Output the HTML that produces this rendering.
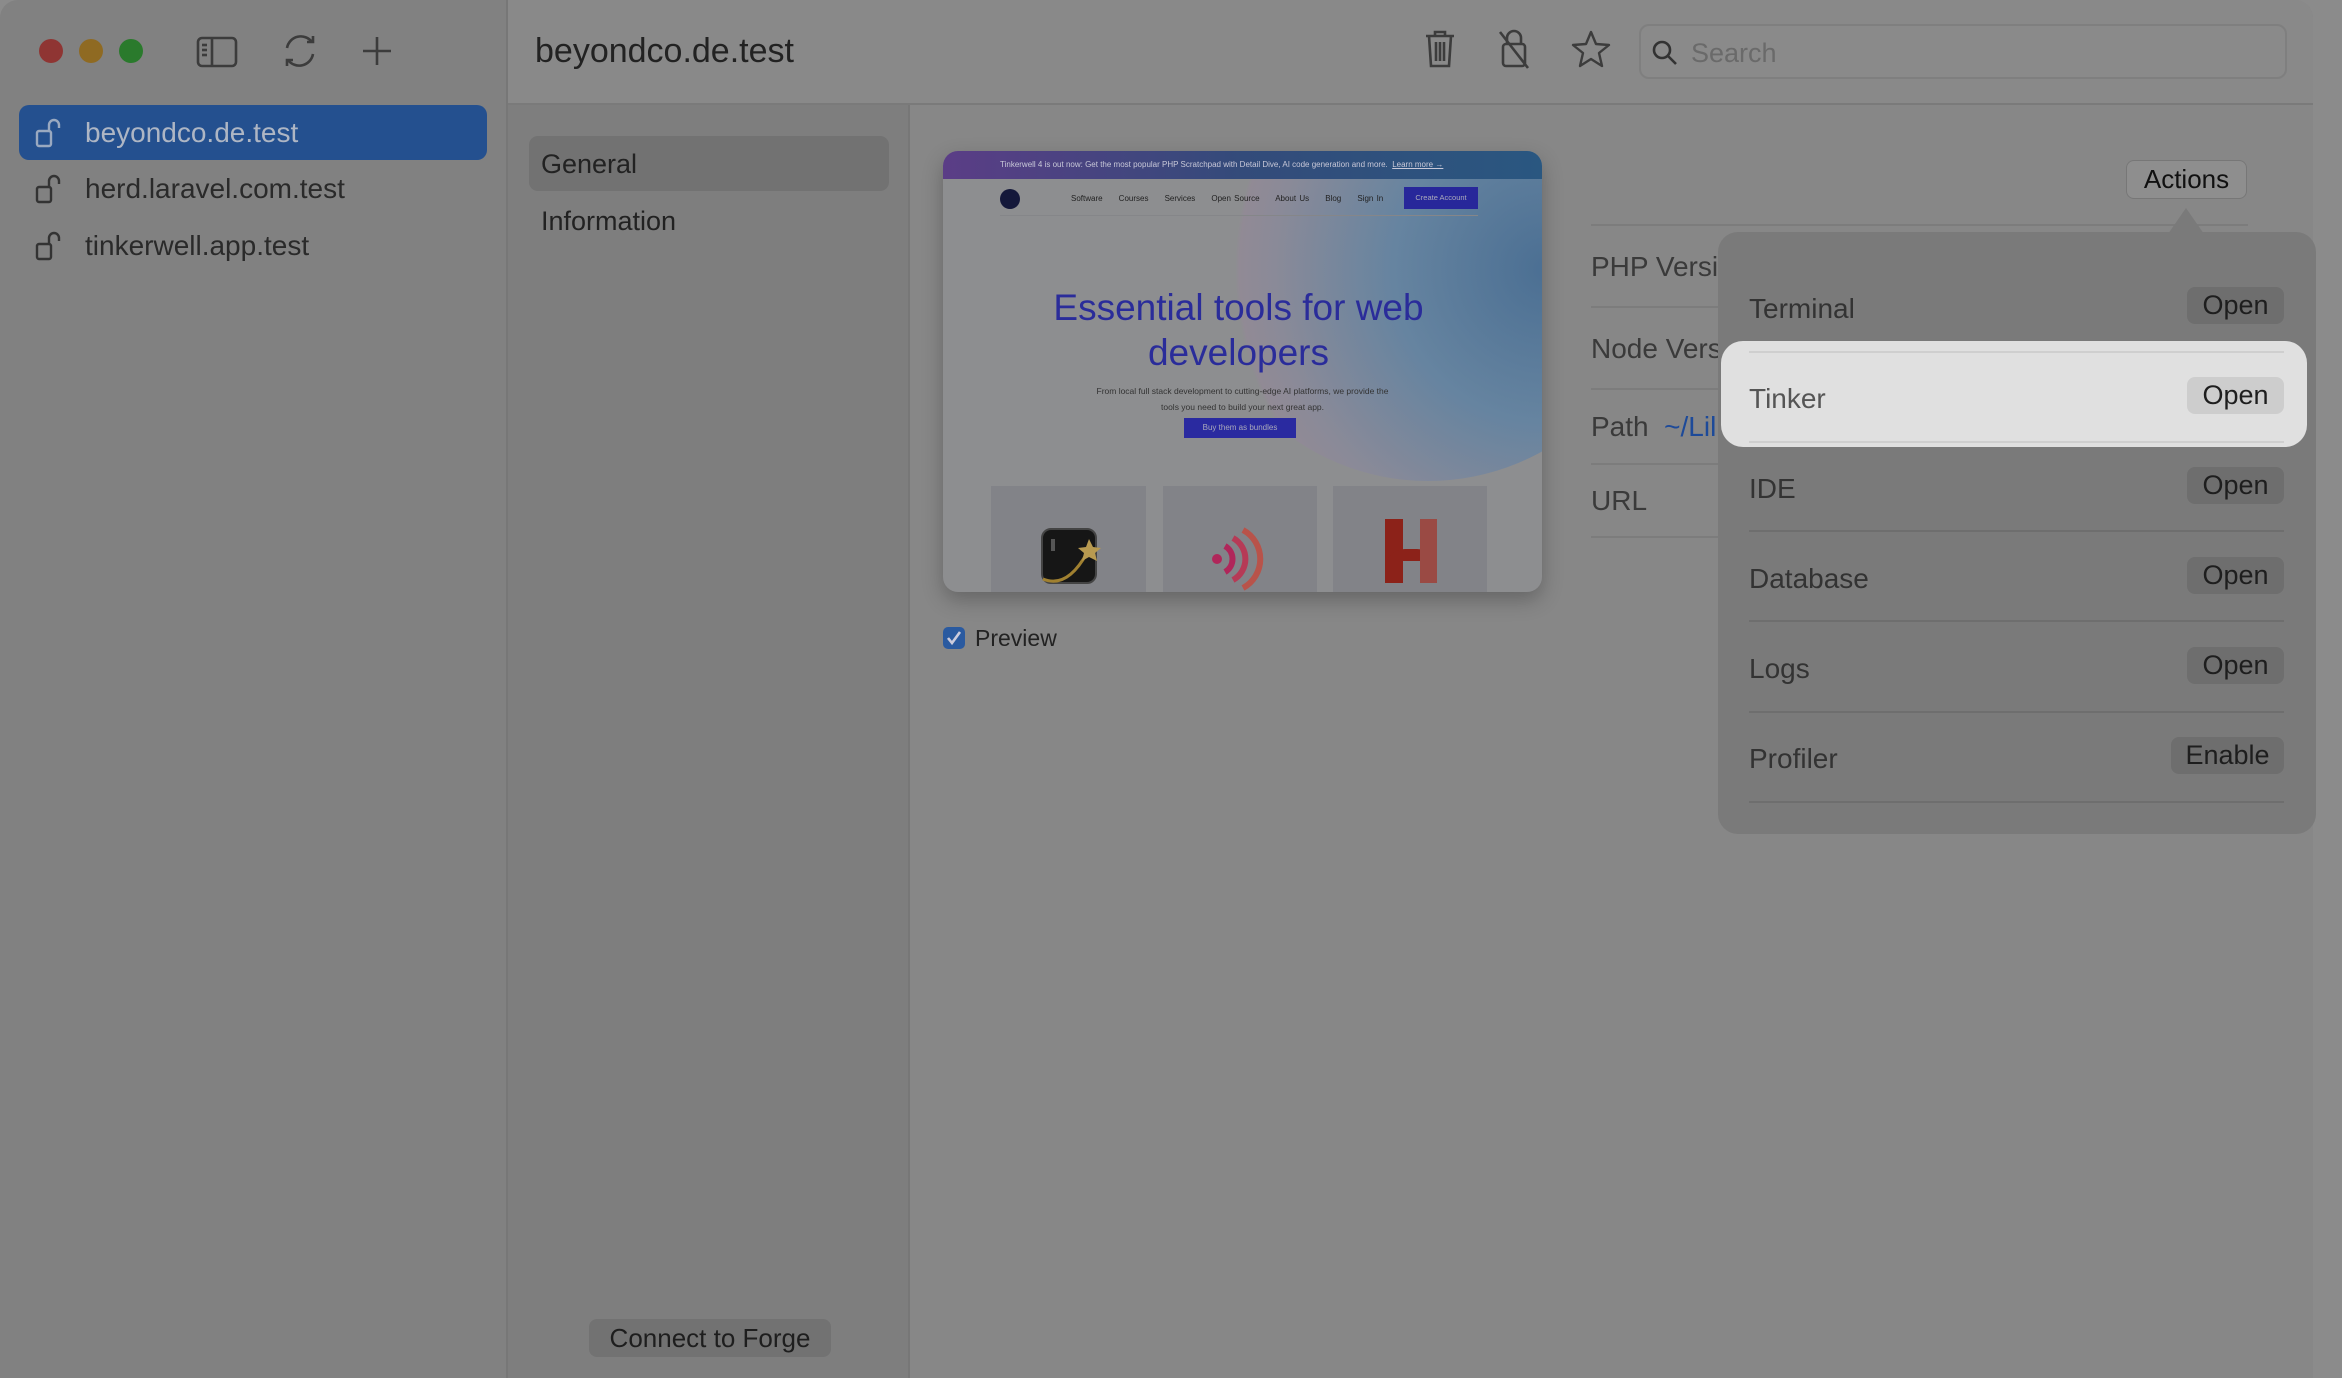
<!DOCTYPE html>
<html><head><meta charset="utf-8"><style>
*{margin:0;padding:0;box-sizing:border-box}
body{width:2342px;height:1378px;background:#8b8b8b;font-family:"Liberation Sans",sans-serif;position:relative;overflow:hidden;color:#2a2a2a}
.abs{position:absolute}
.win{left:0;top:0;width:2313px;height:1378px;background:#878787;border-radius:18px 18px 0 0;overflow:hidden}
.side{left:0;top:0;width:508px;height:1378px;background:#818181;border-right:2px solid #777}
.mid{left:508px;top:105px;width:402px;height:1273px;background:#7e7e7e;border-right:2px solid #777}
.tb{left:508px;top:0;width:1805px;height:105px;background:#898989;border-bottom:2px solid #7a7a7a}
.t{white-space:nowrap;line-height:1}
.sel{left:19px;top:105px;width:468px;height:55px;background:#24508f;border-radius:10px}
.popbtn{right:29px;width:97px;height:37px;background:#6e6e6e;border-radius:8px;font-size:27px;text-align:center;line-height:37px;color:#1e1e1e}
.sep{left:31px;width:535px;height:2px;background:#6e6e6e}
.row{left:31px;font-size:28px;color:#333}
.iline{left:1591px;width:657px;height:2px;background:#7c7c7c}
.ilab{left:1591px;font-size:28px;color:#3a3a3a}
</style></head><body>
<div class="abs win">
 <div class="abs side"></div>
 <div class="abs mid"></div>
 <div class="abs tb"></div>
</div>
<div class="abs" style="left:39px;top:39px;width:24px;height:24px;border-radius:50%;background:#8f3533"></div>
<div class="abs" style="left:79px;top:39px;width:24px;height:24px;border-radius:50%;background:#8f6a22"></div>
<div class="abs" style="left:119px;top:39px;width:24px;height:24px;border-radius:50%;background:#2a7a2c"></div>
<svg class="abs" style="left:196px;top:36px" width="42" height="32" viewBox="0 0 42 32" fill="none" stroke="#3c3c3c" stroke-width="2.6"><rect x="2" y="2" width="38" height="28" rx="4"/><line x1="16" y1="2" x2="16" y2="30"/><line x1="6" y1="9" x2="11" y2="9"/><line x1="6" y1="14" x2="11" y2="14"/><line x1="6" y1="19" x2="11" y2="19"/></svg>
<svg class="abs" style="left:279px;top:30px" width="42" height="42" viewBox="0 0 42 42" fill="none" stroke="#3c3c3c" stroke-width="2.6"><path d="M8 18 A14 14 0 0 1 33 12"/><path d="M34 24 A14 14 0 0 1 9 30"/><path d="M28 12 L34 12 L34 6"/><path d="M14 30 L8 30 L8 36"/></svg>
<svg class="abs" style="left:362px;top:36px" width="30" height="30" viewBox="0 0 30 30" stroke="#3c3c3c" stroke-width="2.6"><line x1="15" y1="1" x2="15" y2="29"/><line x1="1" y1="15" x2="29" y2="15"/></svg>
<div class="abs t" style="left:535px;top:34px;font-size:34px;color:#222">beyondco.de.test</div>
<svg class="abs" style="left:1424px;top:29px" width="32" height="40" viewBox="0 0 32 40" fill="none" stroke="#3c3c3c" stroke-width="2.6"><path d="M2 7h28M11 7V3h10v4M5 7l2 30h18l2-30"/><path d="M12 13v19M16 13v19M20 13v19"/></svg>
<svg class="abs" style="left:1497px;top:28px" width="34" height="42" viewBox="0 0 34 42" fill="none" stroke="#3c3c3c" stroke-width="2.6"><path d="M10 16V10a7 7 0 0 1 14 0v6"/><rect x="6" y="16" width="22" height="22" rx="3"/><line x1="3" y1="4" x2="31" y2="40"/></svg>
<svg class="abs" style="left:1571px;top:30px" width="40" height="38" viewBox="0 0 40 38" fill="none" stroke="#3c3c3c" stroke-width="2.4" stroke-linejoin="round"><path d="M20 2l5 12 13 1-10 8 3 13-11-7-11 7 3-13-10-8 13-1z"/></svg>
<div class="abs" style="left:1639px;top:24px;width:648px;height:55px;border:2px solid #7f7f7f;border-radius:10px;background:#8a8a8a"></div>
<svg class="abs" style="left:1651px;top:39px" width="28" height="28" viewBox="0 0 28 28" fill="none" stroke="#333" stroke-width="2.6"><circle cx="11" cy="11" r="8"/><line x1="17" y1="17" x2="25" y2="25"/></svg>
<div class="abs t" style="left:1691px;top:40px;font-size:27px;color:#6a6a6a">Search</div>
<div class="abs sel"></div>
<svg class="abs" style="left:35px;top:118px" width="28" height="30" viewBox="0 0 28 30" fill="none" stroke="#9aa9c0" stroke-width="2.4"><rect x="2" y="13" width="14" height="15" rx="2"/><path d="M14 13V7a5 5 0 0 1 10 0v3"/></svg>
<div class="abs t" style="left:85px;top:119px;font-size:28px;color:#aeb6c4">beyondco.de.test</div>
<svg class="abs" style="left:35px;top:174px" width="28" height="30" viewBox="0 0 28 30" fill="none" stroke="#333" stroke-width="2.4"><rect x="2" y="13" width="14" height="15" rx="2"/><path d="M14 13V7a5 5 0 0 1 10 0v3"/></svg>
<div class="abs t" style="left:85px;top:175px;font-size:28px;color:#2a2a2a">herd.laravel.com.test</div>
<svg class="abs" style="left:35px;top:231px" width="28" height="30" viewBox="0 0 28 30" fill="none" stroke="#333" stroke-width="2.4"><rect x="2" y="13" width="14" height="15" rx="2"/><path d="M14 13V7a5 5 0 0 1 10 0v3"/></svg>
<div class="abs t" style="left:85px;top:232px;font-size:28px;color:#2a2a2a">tinkerwell.app.test</div>
<div class="abs" style="left:529px;top:136px;width:360px;height:55px;background:#727272;border-radius:9px"></div>
<div class="abs t" style="left:541px;top:151px;font-size:27px;color:#222">General</div>
<div class="abs t" style="left:541px;top:208px;font-size:27px;color:#222">Information</div>
<div class="abs t" style="left:589px;top:1319px;width:242px;height:38px;background:#727272;border-radius:8px;font-size:26px;line-height:38px;text-align:center;color:#1e1e1e">Connect to Forge</div>
<div class="abs" style="left:943px;top:151px;width:599px;height:441px;border-radius:15px;overflow:hidden;background:#8d8e90;box-shadow:0 8px 20px rgba(0,0,0,.25)">
 <div class="abs" style="left:250px;top:-140px;width:470px;height:470px;border-radius:50%;background:radial-gradient(circle at 75% 55%,#4b6f93 0%,#6684a0 35%,#8a8a98 62%,#918a95 70%,rgba(141,142,144,0) 71%)"></div>
 <div class="abs" style="left:0;top:0;width:599px;height:28px;background:linear-gradient(90deg,#5b3d86,#334b7a,#2a5780)"></div>
 <div class="abs t" style="left:57px;top:10px;font-size:8px;color:#c8c8d8">Tinkerwell 4 is out now: Get the most popular PHP Scratchpad with Detail Dive, AI code generation and more. &nbsp;<u>Learn more →</u></div>
 <div class="abs" style="left:57px;top:38px;width:20px;height:20px;border-radius:50%;background:#14183a"></div>
 <div class="abs t" style="left:128px;top:44px;font-size:8px;color:#222;word-spacing:1px">Software &nbsp; &nbsp; Courses &nbsp; &nbsp; Services &nbsp; &nbsp; Open Source &nbsp; &nbsp; About Us &nbsp; &nbsp; Blog &nbsp; &nbsp; Sign In</div>
 <div class="abs t" style="left:461px;top:36px;width:74px;height:22px;background:#27279a;font-size:7.5px;line-height:22px;text-align:center;color:#aab">Create Account</div>
 <div class="abs" style="left:57px;top:64px;width:478px;height:1px;background:#858689"></div>
 <div class="abs t" style="left:-4px;top:134px;width:599px;text-align:center;font-size:37px;line-height:45px;color:#2a2c9a;white-space:normal">Essential tools for web<br>developers</div>
 <div class="abs t" style="left:0;top:232px;width:599px;text-align:center;font-size:8.5px;line-height:16px;color:#333;white-space:normal">From local full stack development to cutting-edge AI platforms, we provide the<br>tools you need to build your next great app.</div>
 <div class="abs t" style="left:241px;top:267px;width:112px;height:20px;background:#2a2aa0;font-size:8px;line-height:20px;text-align:center;color:#aab">Buy them as bundles</div>
 <div class="abs" style="left:48px;top:335px;width:155px;height:120px;background:#828388"></div>
 <div class="abs" style="left:220px;top:335px;width:154px;height:120px;background:#828388"></div>
 <div class="abs" style="left:390px;top:335px;width:154px;height:120px;background:#828388"></div>
 <div class="abs" style="left:98px;top:377px;width:56px;height:56px;border-radius:10px;background:#161616;border:2px solid #444"></div>
 <svg class="abs" style="left:94px;top:380px" width="70" height="60" viewBox="0 0 70 60" fill="none"><path d="M6 48 Q30 58 50 22" stroke="#a08030" stroke-width="3"/><path d="M52 8l4 8 8 1-6 5 2 8-8-4-7 4 2-8-6-5 8-1z" fill="#b89a50"/><rect x="14" y="8" width="4" height="12" fill="#555"/></svg>
 <svg class="abs" style="left:262px;top:375px" width="66" height="66" viewBox="0 0 66 66" fill="none" stroke="#b0265a" stroke-width="6"><circle cx="12" cy="33" r="5" fill="#b0265a" stroke="none"/><path d="M20 20a15 15 0 0 1 0 26"/><path d="M28 12a24 24 0 0 1 0 42" stroke="#b63a56"/><path d="M38 4a33 33 0 0 1 0 58" stroke="#b8534a"/></svg>
 <div class="abs" style="left:442px;top:368px;width:18px;height:64px;background:#8c2219"></div>
 <div class="abs" style="left:442px;top:398px;width:52px;height:34px;background:#8c2219;border-radius:20px 20px 0 0"></div>
 <div class="abs" style="left:477px;top:368px;width:17px;height:64px;background:#9a4a44"></div>
 <div class="abs" style="left:460px;top:410px;width:17px;height:22px;background:#828388"></div>
</div>
<div class="abs" style="left:943px;top:627px;width:22px;height:22px;background:#2a5aa0;border-radius:5px"></div>
<svg class="abs" style="left:945px;top:629px" width="18" height="18" viewBox="0 0 18 18" fill="none" stroke="#ccd" stroke-width="2.6"><path d="M3 9l4 5 8-11"/></svg>
<div class="abs t" style="left:975px;top:627px;font-size:23px;color:#222">Preview</div>
<div class="abs iline" style="top:224px"></div>
<div class="abs t ilab" style="top:253px">PHP Versi</div>
<div class="abs iline" style="top:306px"></div>
<div class="abs t ilab" style="top:335px">Node Vers</div>
<div class="abs iline" style="top:388px"></div>
<div class="abs t ilab" style="top:413px">Path &nbsp;<span style="color:#1d4a99">~/Lil</span></div>
<div class="abs iline" style="top:463px"></div>
<div class="abs t ilab" style="top:487px">URL</div>
<div class="abs iline" style="top:536px"></div>
<div class="abs t" style="left:2126px;top:160px;width:121px;height:39px;background:#8e8e8e;border:1px solid #777;border-radius:8px;font-size:26px;line-height:37px;text-align:center;color:#111">Actions</div>
<div class="abs" style="left:1718px;top:232px;width:598px;height:602px;background:#7a7a7a;border-radius:20px">
 <div class="abs" style="left:450px;top:-24px;width:0;height:0;border-left:18px solid transparent;border-right:18px solid transparent;border-bottom:26px solid #7a7a7a"></div>
 <div class="abs t row" style="top:63px">Terminal</div><div class="abs popbtn" style="top:55px;right:32px">Open</div>
 <div class="abs" style="left:3px;top:109px;width:586px;height:106px;background:#e0e0e0;border-radius:22px"></div>
 <div class="abs sep" style="top:119px;background:#cfcfcf"></div>
 <div class="abs t row" style="top:153px;color:#555">Tinker</div><div class="abs popbtn" style="top:145px;right:32px;background:#cdcdcd">Open</div>
 <div class="abs sep" style="top:209px;background:#cfcfcf"></div>
 <div class="abs t row" style="top:243px">IDE</div><div class="abs popbtn" style="top:235px;right:32px">Open</div>
 <div class="abs sep" style="top:298px"></div>
 <div class="abs t row" style="top:333px">Database</div><div class="abs popbtn" style="top:325px;right:32px">Open</div>
 <div class="abs sep" style="top:388px"></div>
 <div class="abs t row" style="top:423px">Logs</div><div class="abs popbtn" style="top:415px;right:32px">Open</div>
 <div class="abs sep" style="top:479px"></div>
 <div class="abs t row" style="top:513px">Profiler</div><div class="abs popbtn" style="top:505px;right:32px;width:113px">Enable</div>
 <div class="abs sep" style="top:569px"></div>
</div>
</body></html>
